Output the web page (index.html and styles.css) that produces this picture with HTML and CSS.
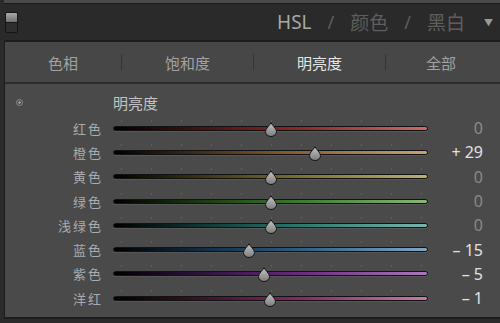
FILE: index.html
```html
<!DOCTYPE html>
<html lang="zh">
<head>
  <meta charset="UTF-8" />
  <meta name="viewport" content="width=device-width, initial-scale=1.0"/>
  <title>HSL 明亮度</title>
  <link rel="stylesheet" href="styles.css">
</head>
<body>

  <div class="top-strip"></div>

  <div class="header">
    <div class="toggle">
      <span class="toggle-on"></span>
      <span class="toggle-off"></span>
    </div>
    <div class="modes">
      <span class="mode active">HSL</span>
      <span class="slash">/</span>
      <span class="mode">颜色</span>
      <span class="slash">/</span>
      <span class="mode">黑白</span>
      <span class="caret">&#9660;</span>
    </div>
  </div>

  <div class="panel">
    <div class="tabs">
      <div class="tab tab-first">色相</div>
      <span class="sep"></span>
      <div class="tab tab-mid">饱和度</div>
      <span class="sep"></span>
      <div class="tab tab-mid active">明亮度</div>
      <span class="sep"></span>
      <div class="tab tab-last">全部</div>
    </div>

    <div class="content">
      <div class="section-head">
        <span class="target-icon"></span>
        <span class="section-title">明亮度</span>
      </div>

      <!-- 红色 -->
      <div class="row">
        <span class="label">红色</span>
        <div class="slider red" style="--v:0">
          <svg class="thumb" viewBox="0 0 13 15">
            <defs>
              <linearGradient id="thumbFill" x1="0" y1="0" x2="0" y2="1">
                <stop offset="0" stop-color="#c4c4c4"/>
                <stop offset="1" stop-color="#7c7c7c"/>
              </linearGradient>
            </defs>
            <path d="M6.5 0.8 C7.6 3.2 12 6.4 12 9.6 A5.5 4.9 0 0 1 1 9.6 C1 6.4 5.4 3.2 6.5 0.8 Z"/>
          </svg>
        </div>
        <span class="value zero">0</span>
      </div>

      <!-- 橙色 -->
      <div class="row">
        <span class="label">橙色</span>
        <div class="slider orange" style="--v:29">
          <svg class="thumb" viewBox="0 0 13 15"><path d="M6.5 0.8 C7.6 3.2 12 6.4 12 9.6 A5.5 4.9 0 0 1 1 9.6 C1 6.4 5.4 3.2 6.5 0.8 Z"/></svg>
        </div>
        <span class="value">+ 29</span>
      </div>

      <!-- 黄色 -->
      <div class="row">
        <span class="label">黄色</span>
        <div class="slider yellow" style="--v:0">
          <svg class="thumb" viewBox="0 0 13 15"><path d="M6.5 0.8 C7.6 3.2 12 6.4 12 9.6 A5.5 4.9 0 0 1 1 9.6 C1 6.4 5.4 3.2 6.5 0.8 Z"/></svg>
        </div>
        <span class="value zero">0</span>
      </div>

      <!-- 绿色 -->
      <div class="row">
        <span class="label">绿色</span>
        <div class="slider green" style="--v:0">
          <svg class="thumb" viewBox="0 0 13 15"><path d="M6.5 0.8 C7.6 3.2 12 6.4 12 9.6 A5.5 4.9 0 0 1 1 9.6 C1 6.4 5.4 3.2 6.5 0.8 Z"/></svg>
        </div>
        <span class="value zero">0</span>
      </div>

      <!-- 浅绿色 -->
      <div class="row">
        <span class="label">浅绿色</span>
        <div class="slider aqua" style="--v:0">
          <svg class="thumb" viewBox="0 0 13 15"><path d="M6.5 0.8 C7.6 3.2 12 6.4 12 9.6 A5.5 4.9 0 0 1 1 9.6 C1 6.4 5.4 3.2 6.5 0.8 Z"/></svg>
        </div>
        <span class="value zero">0</span>
      </div>

      <!-- 蓝色 -->
      <div class="row">
        <span class="label">蓝色</span>
        <div class="slider blue" style="--v:-15">
          <svg class="thumb" viewBox="0 0 13 15"><path d="M6.5 0.8 C7.6 3.2 12 6.4 12 9.6 A5.5 4.9 0 0 1 1 9.6 C1 6.4 5.4 3.2 6.5 0.8 Z"/></svg>
        </div>
        <span class="value">&ndash; 15</span>
      </div>

      <!-- 紫色 -->
      <div class="row">
        <span class="label">紫色</span>
        <div class="slider purple" style="--v:-5">
          <svg class="thumb" viewBox="0 0 13 15"><path d="M6.5 0.8 C7.6 3.2 12 6.4 12 9.6 A5.5 4.9 0 0 1 1 9.6 C1 6.4 5.4 3.2 6.5 0.8 Z"/></svg>
        </div>
        <span class="value">&ndash; 5</span>
      </div>

      <!-- 洋红 -->
      <div class="row">
        <span class="label">洋红</span>
        <div class="slider magenta" style="--v:-1">
          <svg class="thumb" viewBox="0 0 13 15"><path d="M6.5 0.8 C7.6 3.2 12 6.4 12 9.6 A5.5 4.9 0 0 1 1 9.6 C1 6.4 5.4 3.2 6.5 0.8 Z"/></svg>
        </div>
        <span class="value">&ndash; 1</span>
      </div>
    </div>
  </div>

</body>
</html>
```

FILE: styles.css
```css
body {
  margin: 0;
  background-color: #2b2b2b;
  font-family: "Noto Sans", "Noto Sans CJK SC", sans-serif;
  overflow: hidden;
}

.top-strip {
  height: 3px;
  margin-left: 4px;
  background-color: #4a4a4a;
  border-bottom: 1px solid #1c1c1c;
}

.header {
  height: 36px;
  display: flex;
  align-items: center;
  justify-content: space-between;
  padding-left: 5px;
  padding-right: 7px;
  background-color: #2a2a2a;
}

.toggle {
  width: 11px;
  height: 19px;
  display: flex;
  flex-direction: column;
  border: 1px solid #151515;
  border-radius: 2px;
  overflow: hidden;
}

.toggle-on {
  flex: 1;
  background: linear-gradient(#a8a8a8, #707070);
  border-bottom: 1px solid #151515;
}

.toggle-off {
  flex: 1;
  background-color: #2e2e2e;
}

.modes {
  display: flex;
  align-items: center;
  gap: 14px;
  font-family: "Noto Sans", "Noto Sans CJK SC", sans-serif;
  font-size: 19px;
  color: #5e5e5e;
}

.mode.active {
  color: #a8a8a8;
}

.slash {
  font-size: 18px;
  padding: 0 2px;
}

.caret {
  font-size: 9px;
  color: #9a9a9a;
  margin-left: 5px;
}

.panel {
  margin-left: 4px;
  border-left: 1px solid #1c1c1c;
  border-top: 2px solid #1c1c1c;
  border-bottom: 2px solid #1c1c1c;
  background-color: #4a4a4a;
}

.tabs {
  height: 40px;
  display: flex;
  align-items: center;
  background-color: #474747;
  border-bottom: 2px solid #2c2c2c;
  font-family: "Noto Sans CJK SC", sans-serif;
  font-size: 15px;
  color: #a2a2a2;
}

.tab {
  text-align: center;
}

.tab-first {
  width: 116px;
}

.tab-mid {
  width: 131px;
}

.tab-last {
  flex: 1;
  padding-right: 4px;
}

.tab.active {
  color: #e6e6e6;
}

.sep {
  width: 1px;
  height: 16px;
  background-color: #353535;
}

.content {
  height: 233px;
  box-sizing: border-box;
  padding-top: 6px;
}

.section-head,
.row {
  display: grid;
  grid-template-columns: 96px 315px 43px;
  column-gap: 12px;
  align-items: center;
}

.section-head {
  height: 24px;
  margin-bottom: 2px;
}

.target-icon {
  width: 5px;
  height: 5px;
  margin-left: 11px;
  border: 1px solid #8a8a8a;
  border-radius: 50%;
  box-sizing: content-box;
  background: radial-gradient(circle, #9a9a9a 0 1px, transparent 1.5px);
}

.section-title {
  font-family: "Noto Sans CJK SC", sans-serif;
  font-size: 15px;
  color: #c4c4c4;
}

.row {
  height: 24.3px;
}

.label {
  text-align: right;
  font-family: "Noto Sans CJK SC", sans-serif;
  font-size: 13px;
  letter-spacing: 2px;
  margin-right: -2px;
  color: #a8acb0;
}

.slider {
  position: relative;
  height: 3px;
  border: 1px solid #121212;
  border-radius: 3px;
  box-shadow: 0 1px 0 rgba(255, 255, 255, 0.07);
}

/* tick marks above the track */
.slider::before {
  content: "";
  position: absolute;
  left: 7px;
  top: -7px;
  width: 301px;
  height: 2px;
  background: repeating-linear-gradient(to right, #5f5f5f 0 1px, transparent 1px 30px);
}

.thumb {
  position: absolute;
  top: -5px;
  left: calc(157px + var(--v) * 1.5px);
  width: 13px;
  height: 15px;
  transform: translateX(-50%);
  fill: url(#thumbFill);
  stroke: #141414;
  stroke-width: 1;
}

.red     { background: linear-gradient(to right, #000 0%, #4a1414 30%, #8c2a2a 60%, #c86c6c 100%); }
.orange  { background: linear-gradient(to right, #000 0%, #4a3018 30%, #8a6238 60%, #c2a27c 100%); }
.yellow  { background: linear-gradient(to right, #000 0%, #3e3a14 30%, #7c7232 60%, #bab076 100%); }
.green   { background: linear-gradient(to right, #000 0%, #1e3e14 30%, #3e7c2e 60%, #8ab676 100%); }
.aqua    { background: linear-gradient(to right, #000 0%, #123a36 30%, #2a7a70 60%, #76b6ac 100%); }
.blue    { background: linear-gradient(to right, #000 0%, #14304a 30%, #2e5e80 60%, #80a6c6 100%); }
.purple  { background: linear-gradient(to right, #000 0%, #301440 30%, #6a2a80 60%, #aa78ba 100%); }
.magenta { background: linear-gradient(to right, #000 0%, #40142e 30%, #88286c 60%, #c67ca6 100%); }

.value {
  text-align: right;
  white-space: nowrap;
  font-family: "Noto Sans", sans-serif;
  font-size: 16px;
  color: #e2e2e2;
}

.value.zero {
  color: #8a8a8a;
}
```
